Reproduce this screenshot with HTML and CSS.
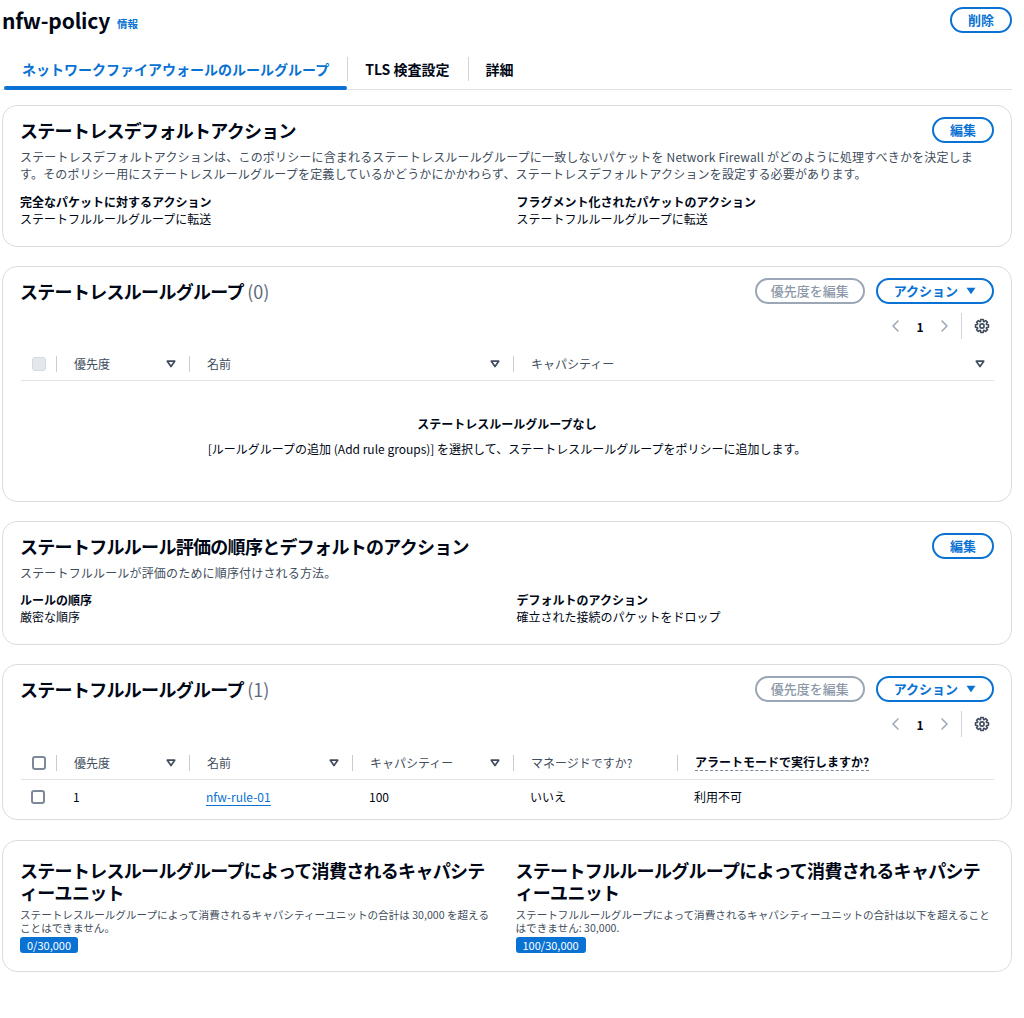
FILE: index.html
```html
<!DOCTYPE html>
<html lang="ja">
<head>
<meta charset="utf-8">
<title>nfw-policy</title>
<link rel="stylesheet" href="styles.css">
</head>
<body>
<div class="page">
  <header class="page-head">
    <div class="page-title">
      <h1>nfw-policy</h1>
      <a class="info" href="#">情報</a>
    </div>
    <button class="btn">削除</button>
  </header>

  <nav class="tabs">
    <div class="tab active">ネットワークファイアウォールのルールグループ</div>
    <div class="tab">TLS 検査設定</div>
    <div class="tab">詳細</div>
  </nav>

  <main class="cards">
    <section class="card card-first">
      <div class="card-head">
        <h2>ステートレスデフォルトアクション</h2>
        <button class="btn">編集</button>
      </div>
      <p class="desc">ステートレスデフォルトアクションは、このポリシーに含まれるステートレスルールグループに一致しないパケットを Network Firewall がどのように処理すべきかを決定します。そのポリシー用にステートレスルールグループを定義しているかどうかにかかわらず、ステートレスデフォルトアクションを設定する必要があります。</p>
      <div class="kv">
        <div>
          <div class="kv-label">完全なパケットに対するアクション</div>
          <div class="kv-value">ステートフルルールグループに転送</div>
        </div>
        <div>
          <div class="kv-label">フラグメント化されたパケットのアクション</div>
          <div class="kv-value">ステートフルルールグループに転送</div>
        </div>
      </div>
    </section>

    <section class="card card-table">
      <div class="card-head">
        <h2>ステートレスルールグループ <span class="count">(0)</span></h2>
        <div class="actions">
          <button class="btn btn-disabled">優先度を編集</button>
          <button class="btn">アクション <svg class="caret" viewBox="0 0 10 8" width="10" height="8"><polygon points="0.5,0.8 9.5,0.8 5,7.2" fill="#0972d3"/></svg></button>
        </div>
      </div>
      <div class="tools">
        <svg class="chev" viewBox="0 0 16 16" width="16" height="16"><path d="M10 3 L5 8 L10 13" fill="none" stroke="#9ba7b6" stroke-width="1.5" stroke-linecap="round" stroke-linejoin="round"/></svg>
        <span class="page-num">1</span>
        <svg class="chev" viewBox="0 0 16 16" width="16" height="16"><path d="M6 3 L11 8 L6 13" fill="none" stroke="#9ba7b6" stroke-width="1.5" stroke-linecap="round" stroke-linejoin="round"/></svg>
        <span class="tool-sep"></span>
        <svg class="gear" viewBox="0 0 16 16" width="16" height="16"><path d="M12.57 6.52 L14.48 6.74 L14.48 9.26 L12.57 9.48 L12.28 10.18 L13.47 11.69 L11.69 13.47 L10.18 12.28 L9.48 12.57 L9.26 14.48 L6.74 14.48 L6.52 12.57 L5.82 12.28 L4.31 13.47 L2.53 11.69 L3.72 10.18 L3.43 9.48 L1.52 9.26 L1.52 6.74 L3.43 6.52 L3.72 5.82 L2.53 4.31 L4.31 2.53 L5.82 3.72 L6.52 3.43 L6.74 1.52 L9.26 1.52 L9.48 3.43 L10.18 3.72 L11.69 2.53 L13.47 4.31 L12.28 5.82 Z" fill="none" stroke="#414d5c" stroke-width="1.6" stroke-linejoin="round"/><circle cx="8" cy="8" r="2.1" fill="none" stroke="#414d5c" stroke-width="1.6"/></svg>
      </div>
      <div class="table t-stateless">
        <div class="tr th-row">
          <div class="cell cb-cell"><span class="cb cb-disabled"></span></div>
          <div class="cell th">優先度<svg class="sort" viewBox="0 0 10 8" width="10" height="8"><polygon points="1.3,1.2 8.7,1.2 5,6.6" fill="none" stroke="#414d5c" stroke-width="1.7" stroke-linejoin="round"/></svg></div>
          <div class="cell th">名前<svg class="sort" viewBox="0 0 10 8" width="10" height="8"><polygon points="1.3,1.2 8.7,1.2 5,6.6" fill="none" stroke="#414d5c" stroke-width="1.7" stroke-linejoin="round"/></svg></div>
          <div class="cell th th-last">キャパシティー<svg class="sort" viewBox="0 0 10 8" width="10" height="8"><polygon points="1.3,1.2 8.7,1.2 5,6.6" fill="none" stroke="#414d5c" stroke-width="1.7" stroke-linejoin="round"/></svg></div>
        </div>
      </div>
      <div class="empty">
        <div class="empty-title">ステートレスルールグループなし</div>
        <div class="empty-text">[ルールグループの追加 (Add rule groups)] を選択して、ステートレスルールグループをポリシーに追加します。</div>
      </div>
    </section>

    <section class="card">
      <div class="card-head">
        <h2>ステートフルルール評価の順序とデフォルトのアクション</h2>
        <button class="btn">編集</button>
      </div>
      <p class="desc">ステートフルルールが評価のために順序付けされる方法。</p>
      <div class="kv">
        <div>
          <div class="kv-label">ルールの順序</div>
          <div class="kv-value">厳密な順序</div>
        </div>
        <div>
          <div class="kv-label">デフォルトのアクション</div>
          <div class="kv-value">確立された接続のパケットをドロップ</div>
        </div>
      </div>
    </section>

    <section class="card card-table card-rows">
      <div class="card-head">
        <h2>ステートフルルールグループ <span class="count">(1)</span></h2>
        <div class="actions">
          <button class="btn btn-disabled">優先度を編集</button>
          <button class="btn">アクション <svg class="caret" viewBox="0 0 10 8" width="10" height="8"><polygon points="0.5,0.8 9.5,0.8 5,7.2" fill="#0972d3"/></svg></button>
        </div>
      </div>
      <div class="tools">
        <svg class="chev" viewBox="0 0 16 16" width="16" height="16"><path d="M10 3 L5 8 L10 13" fill="none" stroke="#9ba7b6" stroke-width="1.5" stroke-linecap="round" stroke-linejoin="round"/></svg>
        <span class="page-num">1</span>
        <svg class="chev" viewBox="0 0 16 16" width="16" height="16"><path d="M6 3 L11 8 L6 13" fill="none" stroke="#9ba7b6" stroke-width="1.5" stroke-linecap="round" stroke-linejoin="round"/></svg>
        <span class="tool-sep"></span>
        <svg class="gear" viewBox="0 0 16 16" width="16" height="16"><path d="M12.57 6.52 L14.48 6.74 L14.48 9.26 L12.57 9.48 L12.28 10.18 L13.47 11.69 L11.69 13.47 L10.18 12.28 L9.48 12.57 L9.26 14.48 L6.74 14.48 L6.52 12.57 L5.82 12.28 L4.31 13.47 L2.53 11.69 L3.72 10.18 L3.43 9.48 L1.52 9.26 L1.52 6.74 L3.43 6.52 L3.72 5.82 L2.53 4.31 L4.31 2.53 L5.82 3.72 L6.52 3.43 L6.74 1.52 L9.26 1.52 L9.48 3.43 L10.18 3.72 L11.69 2.53 L13.47 4.31 L12.28 5.82 Z" fill="none" stroke="#414d5c" stroke-width="1.6" stroke-linejoin="round"/><circle cx="8" cy="8" r="2.1" fill="none" stroke="#414d5c" stroke-width="1.6"/></svg>
      </div>
      <div class="table t-stateful">
        <div class="tr th-row">
          <div class="cell cb-cell"><span class="cb"></span></div>
          <div class="cell th">優先度<svg class="sort" viewBox="0 0 10 8" width="10" height="8"><polygon points="1.3,1.2 8.7,1.2 5,6.6" fill="none" stroke="#414d5c" stroke-width="1.7" stroke-linejoin="round"/></svg></div>
          <div class="cell th">名前<svg class="sort" viewBox="0 0 10 8" width="10" height="8"><polygon points="1.3,1.2 8.7,1.2 5,6.6" fill="none" stroke="#414d5c" stroke-width="1.7" stroke-linejoin="round"/></svg></div>
          <div class="cell th">キャパシティー<svg class="sort" viewBox="0 0 10 8" width="10" height="8"><polygon points="1.3,1.2 8.7,1.2 5,6.6" fill="none" stroke="#414d5c" stroke-width="1.7" stroke-linejoin="round"/></svg></div>
          <div class="cell th th-plain">マネージドですか?</div>
          <div class="cell th th-plain"><span class="tip">アラートモードで実行しますか?</span></div>
        </div>
        <div class="tr td-row">
          <div class="cell cb-cell"><span class="cb"></span></div>
          <div class="cell td">1</div>
          <div class="cell td"><a class="link" href="#">nfw-rule-01</a></div>
          <div class="cell td">100</div>
          <div class="cell td">いいえ</div>
          <div class="cell td">利用不可</div>
        </div>
      </div>
    </section>

    <section class="card card-units">
      <div class="units">
        <div class="unit">
          <h2 class="units-title">ステートレスルールグループによって消費されるキャパシティーユニット</h2>
          <p class="units-desc"><span class="line">ステートレスルールグループによって消費されるキャパシティーユニットの合計は 30,000 を超える</span><span class="line">ことはできません。</span></p>
          <span class="badge">0/30,000</span>
        </div>
        <div class="unit">
          <h2 class="units-title">ステートフルルールグループによって消費されるキャパシティーユニット</h2>
          <p class="units-desc"><span class="line">ステートフルルールグループによって消費されるキャパシティーユニットの合計は以下を超えること</span><span class="line">はできません: 30,000.</span></p>
          <span class="badge">100/30,000</span>
        </div>
      </div>
    </section>
  </main>
</div>
</body>
</html>
```

FILE: styles.css
```css
* { box-sizing: border-box; }

body {
  margin: 0;
  background: #ffffff;
  color: #000716;
  font-family: "Noto Sans CJK JP", "Noto Sans", sans-serif;
  font-size: 12px;
}

.page {
  padding: 0 12px 0 2px;
}

/* header */
.page-head {
  display: flex;
  justify-content: space-between;
  align-items: center;
  padding-top: 7px;
  height: 33px;
}
.page-title {
  display: flex;
  align-items: baseline;
}
.page-title h1 {
  margin: 0;
  font-size: 21px;
  line-height: 26px;
  font-weight: 700;
  letter-spacing: -0.2px;
  color: #000716;
}
.info {
  margin-left: 7px;
  font-size: 10.5px;
  font-weight: 700;
  color: #0972d3;
  text-decoration: none;
  position: relative;
  top: -1px;
}

/* buttons */
.btn {
  display: inline-flex;
  align-items: center;
  justify-content: center;
  gap: 8px;
  height: 26px;
  padding: 0 16px;
  border: 2px solid #0972d3;
  border-radius: 20px;
  background: #fff;
  color: #0972d3;
  font-family: inherit;
  font-size: 13px;
  font-weight: 700;
  line-height: 22px;
  cursor: pointer;
}
.btn-disabled {
  border-color: #9ba7b6;
  color: #8d99a8;
  font-weight: 500;
  padding: 0 14px;
}
.caret { display: block; }

/* tabs */
.tabs {
  display: flex;
  margin-top: 18px;
  padding-left: 2px;
  border-bottom: 1px solid #dfe3e7;
}
.tab {
  position: relative;
  padding: 8px 18px 10px;
  font-size: 14px;
  line-height: 20px;
  font-weight: 700;
  color: #000716;
}
.tab + .tab::before {
  content: "";
  position: absolute;
  left: 0;
  top: 6px;
  width: 1px;
  height: 24px;
  background: #d1d5db;
}
.tab.active {
  color: #0972d3;
}
.tab.active::after {
  content: "";
  position: absolute;
  left: 0;
  right: 0;
  bottom: -1px;
  height: 4px;
  border-radius: 2px;
  background: #0972d3;
}

/* cards */
.cards {
  display: flex;
  flex-direction: column;
  gap: 19px;
  margin-top: 15px;
}
.card {
  border: 1px solid #d9dde2;
  border-radius: 15px;
  padding: 11px 17px 19px;
  background: #fff;
}
.card-head {
  display: flex;
  justify-content: space-between;
  align-items: center;
  min-height: 26px;
}
.card-head h2 {
  margin: 0;
  font-size: 18px;
  line-height: 26px;
  font-weight: 700;
  letter-spacing: -0.7px;
  color: #000716;
}
.count {
  font-weight: 400;
  color: #5f6b7a;
  letter-spacing: 0;
}
.actions {
  display: flex;
  gap: 11px;
}
.desc {
  margin: 5px 0 0;
  font-size: 12px;
  line-height: 17px;
  letter-spacing: 0.17px;
  color: #414d5c;
}
.kv {
  display: grid;
  grid-template-columns: minmax(0, 1fr) minmax(0, 1fr);
  column-gap: 19px;
  margin-top: 10px;
}
.card-first .kv {
  margin-top: 11px;
}
.kv-label {
  font-weight: 700;
  line-height: 17px;
}
.kv-value {
  line-height: 17px;
}

/* table cards */
.card-table {
  padding-bottom: 0;
}
.card-rows {
  padding-bottom: 6px;
}
.card-rows + .card {
  margin-top: 1px;
}
.tools {
  display: flex;
  justify-content: flex-end;
  align-items: center;
  height: 26px;
  margin-top: 9px;
  padding-right: 4px;
}
.chev {
  display: block;
  margin: 0 4px;
}
.page-num {
  width: 24px;
  text-align: center;
  font-weight: 700;
  font-size: 12px;
}
.tool-sep {
  width: 1px;
  height: 26px;
  background: #d1d5db;
  margin: 0 12px 0 5px;
}
.gear { display: block; }

.table {
  margin-top: 8px;
}
.t-stateful {
  margin-top: 9px;
}
.tr {
  display: grid;
}
.t-stateless .tr {
  grid-template-columns: 35px 133px 324px 1fr;
}
.t-stateful .tr {
  grid-template-columns: 35px 133px 163px 161px 164px 1fr;
}
.th-row {
  height: 34px;
  border-bottom: 1px solid #dfe3e7;
  margin-left: 1px;
}
.td-row {
  height: 33px;
}
.cell {
  display: flex;
  align-items: center;
  position: relative;
  font-size: 12px;
}
.cb-cell {
  padding-left: 11px;
}
.th {
  justify-content: space-between;
  padding: 0 13px 0 18px;
  color: #414d5c;
}
.th::before {
  content: "";
  position: absolute;
  left: 0;
  top: 9px;
  width: 1px;
  height: 16px;
  background: #c6ccd3;
}
.th-last {
  padding-right: 9px;
}
.th-plain {
  justify-content: flex-start;
}
.tip {
  font-weight: 700;
  color: #000716;
  border-bottom: 1px dashed #7d8998;
  line-height: 16px;
}
.sort { display: block; }
.td {
  padding-left: 18px;
  color: #000716;
}
.link {
  color: #0972d3;
  text-decoration: underline;
  text-underline-offset: 3px;
}
.cb {
  display: block;
  width: 14px;
  height: 14px;
  border: 2px solid #7d8998;
  border-radius: 3px;
  background: #fff;
}
.cb-disabled {
  border: 1px solid #d5dae0;
  background: #e4e7eb;
}

.empty {
  text-align: center;
  padding: 33px 0 44px;
}
.empty-title {
  font-weight: 700;
  line-height: 20px;
}
.empty-text {
  margin-top: 6px;
  line-height: 17px;
}

/* capacity units */
.card-units {
  padding-top: 18px;
  padding-bottom: 18px;
}
.units {
  display: grid;
  grid-template-columns: minmax(0, 1fr) minmax(0, 1fr);
  column-gap: 17px;
}
.unit {
  min-width: 0;
}
.units-title {
  margin: 0;
  font-size: 18px;
  line-height: 22px;
  font-weight: 700;
  letter-spacing: -0.7px;
  line-break: loose;
}
.units-desc {
  margin: 5px 0 0;
  font-size: 10.6px;
  line-height: 13px;
  color: #414d5c;
}
.units-desc .line {
  display: block;
  white-space: nowrap;
}
.badge {
  display: inline-block;
  margin-top: 3px;
  padding: 0 7px;
  border-radius: 3px;
  background: #0972d3;
  color: #fff;
  font-size: 11px;
  line-height: 16px;
}
```
